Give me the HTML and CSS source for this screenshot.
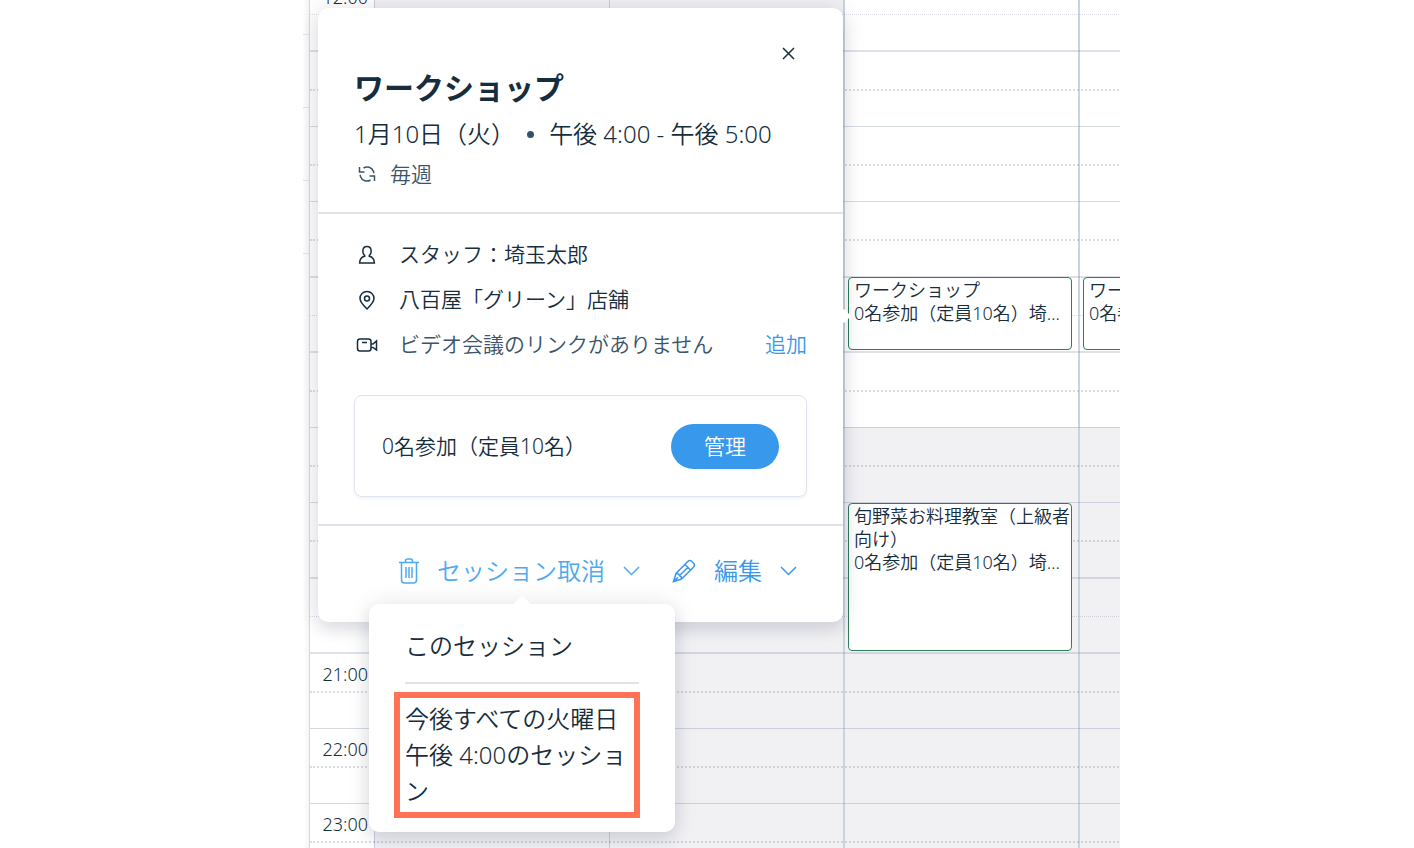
FILE: index.html
```html
<!DOCTYPE html>
<html lang="ja">
<head>
    <meta charset="UTF-8">
    <meta name="viewport" content="width=device-width, initial-scale=1">
    <title>予約カレンダー</title>
    <link rel="stylesheet" href="styles.css">
</head>
<body>
    <main class="calendar">
        <div class="board">
            <div class="edge"></div>
            <div class="closed"></div>
            <div class="time-column"></div>
            <div class="day day-1"></div>
            <div class="day day-2"></div>
            <div class="day day-3"></div>

            <div class="hours">
                <div class="hour"><time>12:00</time><span class="half"></span></div>
                <div class="hour"><time>13:00</time><span class="half"></span></div>
                <div class="hour"><time>14:00</time><span class="half"></span></div>
                <div class="hour"><time>15:00</time><span class="half"></span></div>
                <div class="hour"><time>16:00</time><span class="half"></span></div>
                <div class="hour"><time>17:00</time><span class="half"></span></div>
                <div class="hour"><time>18:00</time><span class="half"></span></div>
                <div class="hour"><time>19:00</time><span class="half"></span></div>
                <div class="hour"><time>20:00</time><span class="half"></span></div>
                <div class="hour"><time>21:00</time><span class="half"></span></div>
                <div class="hour"><time>22:00</time><span class="half"></span></div>
                <div class="hour"><time>23:00</time><span class="half"></span></div>
            </div>

            <article class="event event-workshop">
                <p>ワークショップ</p>
                <p class="event-info">0名参加（定員10名）埼玉太郎</p>
            </article>
            <article class="event event-cooking">
                <p>旬野菜お料理教室（上級者向け）</p>
                <p class="event-info">0名参加（定員10名）埼玉太郎</p>
            </article>
            <article class="event event-next">
                <p>ワークショップ</p>
                <p class="event-info">0名参加（定員10名）埼玉太郎</p>
            </article>
        </div>

        <section class="popover">
            <header class="popover-header">
                <button class="close" type="button" aria-label="閉じる">
                    <svg width="13" height="13" viewBox="0 0 13 13"><path d="M1 1l11 11M12 1L1 12"/></svg>
                </button>
                <h1>ワークショップ</h1>
                <p class="date"><span>1月10日（火）</span><span class="dot"></span><span>午後 4:00 - 午後 5:00</span></p>
                <p class="repeat">
                    <svg width="18" height="18" viewBox="0 0 18 18"><path d="M1.500 2v5h5M1.500 7h3.500M5.500 3C9 .8 14 2 15.500 6.500q.3 1 .3 1.800M16.500 16v-5h-5M16.500 11h-3.500M12.500 15C9 17.200 4 16 2.500 11.500q-.3-1-.3-1.800"/></svg>
                    毎週
                </p>
            </header>

            <div class="popover-body">
                <ul class="details">
                    <li>
                        <svg width="22" height="22" viewBox="0 0 22 22"><path d="M8.700 11.500C7.500 10.300 6.800 9 6.800 7.200 6.900 4.200 8.600 2.500 11 2.500s4.100 1.700 4.200 4.700c0 1.800-.7 3.100-1.900 4.300v.8c3 .6 4.900 2.400 5.100 6.700H3.600c.2-4.300 2.100-6.100 5.100-6.700z"/></svg>
                        <span>スタッフ：埼玉太郎</span>
                    </li>
                    <li>
                        <svg width="22" height="22" viewBox="0 0 22 22"><path d="M11 20C6.500 15.500 4 12.700 4 9.500a7 7 0 0 1 14 0C18 12.700 15.500 15.500 11 20z"/><circle cx="11" cy="9.500" r="2.500"/></svg>
                        <span>八百屋「グリーン」店舗</span>
                    </li>
                    <li class="muted">
                        <svg width="22" height="22" viewBox="0 0 22 22"><path d="M4 5h8.500q2.500 0 2.500 2.500v7q0 2.500-2.500 2.500H4q-2.500 0-2.500-2.500v-7Q1.500 5 4 5zM6 8.500h5M15 10h2l3.500-3v9L17 13.500h-2z"/></svg>
                        <span>ビデオ会議のリンクがありません</span>
                        <a class="add" href="#">追加</a>
                    </li>
                </ul>
                <div class="attendance">
                    <span>0名参加（定員10名）</span>
                    <button class="manage" type="button">管理</button>
                </div>
            </div>

            <footer class="actions">
                <button class="action action-cancel" type="button">
                    <svg width="20" height="26" viewBox="0 0 20 26"><path d="M0 4.500h20M6.500 4V3q0-2 2-2h3q2 0 2 2v1M2.500 4.500V22q0 3 3 3h9q3 0 3-3V4.500M7 9v11M10 9v11M13 9v11"/></svg>
                    <span>セッション取消</span>
                    <svg width="17" height="10" viewBox="0 0 17 10"><path d="M1 1l7.500 7.500L16 1"/></svg>
                </button>
                <button class="action" type="button">
                    <svg width="24" height="24" viewBox="0 0 24 24"><path d="M1.500 22.500L4 14.500 15.800 2.500q2-2 4 0l1.700 1.700q2 2 0 4L9.500 20zM4 14.500l2.500.5 1 1.800 1.700 1 .3 2.200M13 5.500l5.500 5.500M7.500 16.500l8.500-8.300M1.500 22.500l4.500-4.300"/></svg>
                    <span>編集</span>
                    <svg width="17" height="10" viewBox="0 0 17 10"><path d="M1 1l7.500 7.500L16 1"/></svg>
                </button>
            </footer>

            <div class="menu">
                <button class="menu-item" type="button">このセッション</button>
                <hr>
                <button class="menu-item selected" type="button">今後すべての火曜日午後 4:00のセッション</button>
            </div>
        </section>
    </main>
</body>
</html>
```
FILE: styles.css
```css
* {
    margin: 0;
    padding: 0;
    box-sizing: border-box;
}
body {
    padding: 0 294px 0 303px;
    background: #fff;
    color: #162d3d;
    font-family: "Noto Sans", "Noto Sans CJK JP", sans-serif;
    font-weight: 350;
}
button {
    border: 0;
    background: none;
    color: inherit;
    font: inherit;
    cursor: pointer;
}
svg {
    flex: none;
    fill: none;
    stroke: currentColor;
    stroke-width: 1.5;
}

/* calendar grid */
.calendar {
    position: relative;
    height: 100vh;
    overflow: hidden;
}
.board {
    display: grid;
    grid-template-columns: 7px 65px repeat(4, 235px);
    grid-template-rows: repeat(12, minmax(0, 1fr));
    height: 903px;
    margin-top: -25px;
}
.edge {
    grid-area: 1 / 1 / -1 / 2;
    border-right: 1px solid #d5d9e2;
    background: repeating-linear-gradient(transparent 0 59px, #dfe3ea 59px 60px, transparent 60px 73px) no-repeat 0 0 / 100% 300px, linear-gradient(to right, #fff, #f5f5f7);
}
.time-column {
    grid-area: 1 / 2 / -1 / 3;
    border-right: 1px solid #c9cedb;
}
.day {
    grid-row: 1 / -1;
    border-right: 2px solid #cbd3dd;
}
.day-1 {
    grid-column: 3;
    border-right: 1px solid #c9cedb;
    background: #f1f1f4;
}
.day-2 {
    grid-column: 4;
    background: #f1f1f4;
}
.day-3 {
    grid-column: 5;
}
.closed {
    grid-area: 7 / 5 / -1 / -1;
    background: #f1f1f4;
}
.hours {
    grid-area: 1 / 2 / -1 / -1;
    display: grid;
    grid-template-rows: repeat(12, minmax(0, 1fr));
}
.hour {
    display: grid;
    grid-template-rows: minmax(0, 1fr) minmax(0, 1fr);
    border-top: 1px solid rgba(90, 110, 140, 0.25);
}
.hour:nth-child(4n+1), .hour:nth-child(4n+2) {
    border-top: 2px solid rgba(90, 110, 140, 0.2);
}
.hour time {
    width: 58px;
    padding-top: 9px;
    font-size: 18px;
    line-height: 22px;
    text-align: right;
}
.half {
    border-top: 2px dotted rgba(90, 100, 130, 0.22);
}
.hour:nth-child(4n+1) .half {
    border-top-width: 1px;
}

/* events */
.event {
    width: 224px;
    margin: 1px 0 1px 3px;
    padding: 1px 0 0 5px;
    border: 1px solid #2f7d5b;
    border-radius: 4px;
    background: #fff;
    font-size: 18px;
    line-height: 23px;
    overflow: hidden;
}
.event-info {
    padding-right: 4px;
    white-space: nowrap;
    overflow: hidden;
    text-overflow: ellipsis;
}
.event-workshop {
    grid-area: 5 / 5 / 6 / 6;
}
.event-cooking {
    grid-area: 8 / 5 / 10 / 6;
}
.event-next {
    grid-area: 5 / 6 / 6 / 7;
}

/* session popover */
.popover {
    position: absolute;
    top: 8px;
    left: 15px;
    width: 525px;
    border-radius: 10px;
    background: #fff;
    box-shadow: 0 0 24px rgba(22, 30, 60, 0.1), 0 8px 16px rgba(22, 30, 60, 0.1);
}
.popover::after {
    content: "";
    position: absolute;
    top: 303px;
    right: -6px;
    width: 10px;
    height: 10px;
    background: #fff;
    transform: rotate(45deg);
}
.popover-header {
    position: relative;
    padding: 60px 36px 20px;
    border-bottom: 2px solid #dfe3eb;
}
.close {
    position: absolute;
    top: 34px;
    right: 44px;
    width: 22px;
    height: 22px;
    line-height: 0;
}
h1 {
    font-size: 30px;
    line-height: 40px;
}
.date {
    display: flex;
    align-items: center;
    padding-top: 6px;
    font-size: 24px;
    line-height: 40px;
}
.dot {
    width: 7px;
    height: 7px;
    margin: 0 15px 0 12px;
    border-radius: 50%;
    background: #32536a;
}
.repeat {
    display: flex;
    align-items: center;
    gap: 14px;
    padding: 2px 0 0 4px;
    color: #3b5469;
    font-size: 21px;
    line-height: 36px;
}
.popover-body {
    padding: 18px 36px 27px;
}
.details {
    list-style: none;
}
.details li {
    display: flex;
    align-items: center;
    gap: 21px;
    padding-left: 2px;
    font-size: 21px;
    line-height: 45px;
}
.details svg {
    color: #162d3d;
}
.details .muted {
    color: #3b5469;
}
.add {
    margin-left: auto;
    color: #3899ec;
    text-decoration: none;
}
.attendance {
    display: flex;
    align-items: center;
    justify-content: space-between;
    margin-top: 28px;
    padding: 28px 27px 27px;
    border: 1px solid #dfe3eb;
    border-radius: 8px;
    box-shadow: 0 2px 3px rgba(22, 45, 61, 0.06);
    font-size: 21px;
    line-height: 45px;
}
.manage {
    padding: 0 33px;
    border-radius: 23px;
    background: #3899ec;
    color: #fff;
}
.actions {
    display: flex;
    justify-content: flex-end;
    gap: 32px;
    padding: 25px 46px 31px;
    border-top: 2px solid #dfe3eb;
}
.action {
    display: flex;
    align-items: center;
    gap: 18px;
    color: #3899ec;
    font-size: 24px;
    line-height: 40px;
}
.action-cancel {
    color: #4eaaf0;
}

/* cancel menu */
.menu {
    position: absolute;
    top: 596px;
    left: 51px;
    width: 306px;
    padding: 24px 36px 14px;
    border-radius: 10px;
    background: #fff;
    box-shadow: 0 0 24px rgba(22, 30, 60, 0.1), 0 8px 16px rgba(22, 30, 60, 0.1);
}
.menu::before {
    content: "";
    position: absolute;
    top: -6px;
    left: 147px;
    width: 12px;
    height: 12px;
    background: #fff;
    transform: rotate(45deg);
}
.menu-item {
    display: block;
    width: 100%;
    font-size: 24px;
    line-height: 36px;
    text-align: left;
}
.menu hr {
    margin-top: 18px;
    border: 0;
    border-top: 2px solid #dfe3eb;
}
.menu .selected {
    width: 246px;
    margin: 8px 0 0 -11px;
    padding: 3px 0 3px 5px;
    border: 6px solid #ff7255;
}
```
